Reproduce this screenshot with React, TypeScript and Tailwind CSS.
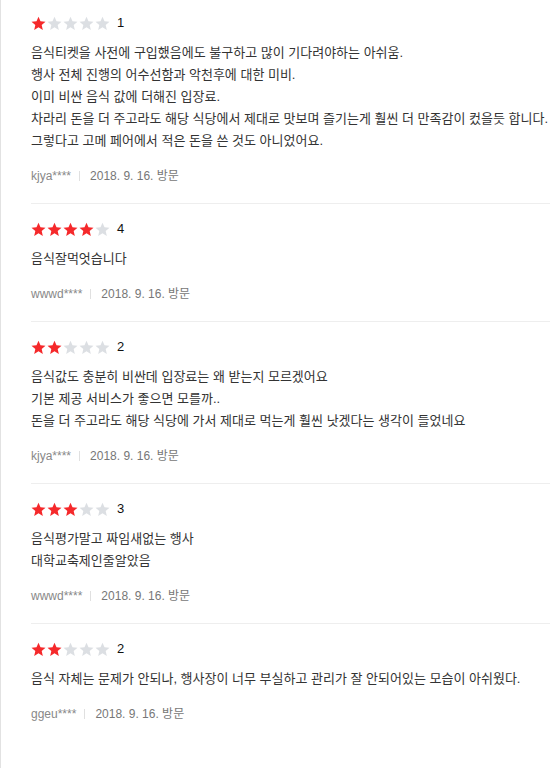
import React from "react";

type Review = { rating: number; lines: string[]; user: string; date: string };

const reviews: Review[] = [
  {
    rating: 1,
    lines: [
      "음식티켓을 사전에 구입했음에도 불구하고 많이 기다려야하는 아쉬움.",
      "행사 전체 진행의 어수선함과 악천후에 대한 미비.",
      "이미 비싼 음식 값에 더해진 입장료.",
      "차라리 돈을 더 주고라도 해당 식당에서 제대로 맛보며 즐기는게 훨씬 더 만족감이 컸을듯 합니다.",
      "그렇다고 고메 페어에서 적은 돈을 쓴 것도 아니었어요.",
    ],
    user: "kjya****",
    date: "2018. 9. 16. 방문",
  },
  { rating: 4, lines: ["음식잘먹엇습니다"], user: "wwwd****", date: "2018. 9. 16. 방문" },
  {
    rating: 2,
    lines: [
      "음식값도 충분히 비싼데 입장료는 왜 받는지 모르겠어요",
      "기본 제공 서비스가 좋으면 모를까..",
      "돈을 더 주고라도 해당 식당에 가서 제대로 먹는게 훨씬 낫겠다는 생각이 들었네요",
    ],
    user: "kjya****",
    date: "2018. 9. 16. 방문",
  },
  {
    rating: 3,
    lines: ["음식평가말고 짜임새없는 행사", "대학교축제인줄알았음"],
    user: "wwwd****",
    date: "2018. 9. 16. 방문",
  },
  {
    rating: 2,
    lines: ["음식 자체는 문제가 안되나, 행사장이 너무 부실하고 관리가 잘 안되어있는 모습이 아쉬웠다."],
    user: "ggeu****",
    date: "2018. 9. 16. 방문",
  },
];

function Star({ on }: { on: boolean }) {
  return (
    <svg width="15" height="15" viewBox="0 0 24 24" className="shrink-0">
      <path
        d="M12 1l3.2 7.4 8 .7-6.1 5.3 1.8 7.9L12 18.1 5.1 22.3l1.8-7.9L.8 9.1l8-.7z"
        fill={on ? "#f5292b" : "#dcdfe3"}
      />
    </svg>
  );
}

export default function App() {
  return (
    <div
      className="min-h-[768px] w-[550px] border-l border-[#e2e2e2] bg-white pl-[30px]"
      style={{ fontFamily: '"Liberation Sans", "Noto Sans CJK KR", sans-serif' }}
    >
      {reviews.map((r, i) => (
        <div
          key={i}
          className={`${i === 0 ? "pt-[15px]" : "pt-[17px] border-t border-[#eeeeee]"} pb-[18px]`}
        >
          <div className="flex h-[16px] items-center">
            <div className="flex gap-[1px]">
              {[0, 1, 2, 3, 4].map((k) => (
                <Star key={k} on={k < r.rating} />
              ))}
            </div>
            <span className="ml-[7px] text-[13px] text-[#111]">{r.rating}</span>
          </div>
          <div className="mt-[11px] text-[13px] leading-[22px] text-[#333]">
            {r.lines.map((l, j) => (
              <div key={j}>{l}</div>
            ))}
          </div>
          <div className="mt-[15px] flex h-[18px] items-center text-[12px] text-[#888]">
            <span>{r.user}</span>
            <span className="ml-[8px] mr-[10px] h-[10px] w-px bg-[#e0e0e0]" />
            <span className="text-[#777]">{r.date}</span>
          </div>
        </div>
      ))}
    </div>
  );
}
